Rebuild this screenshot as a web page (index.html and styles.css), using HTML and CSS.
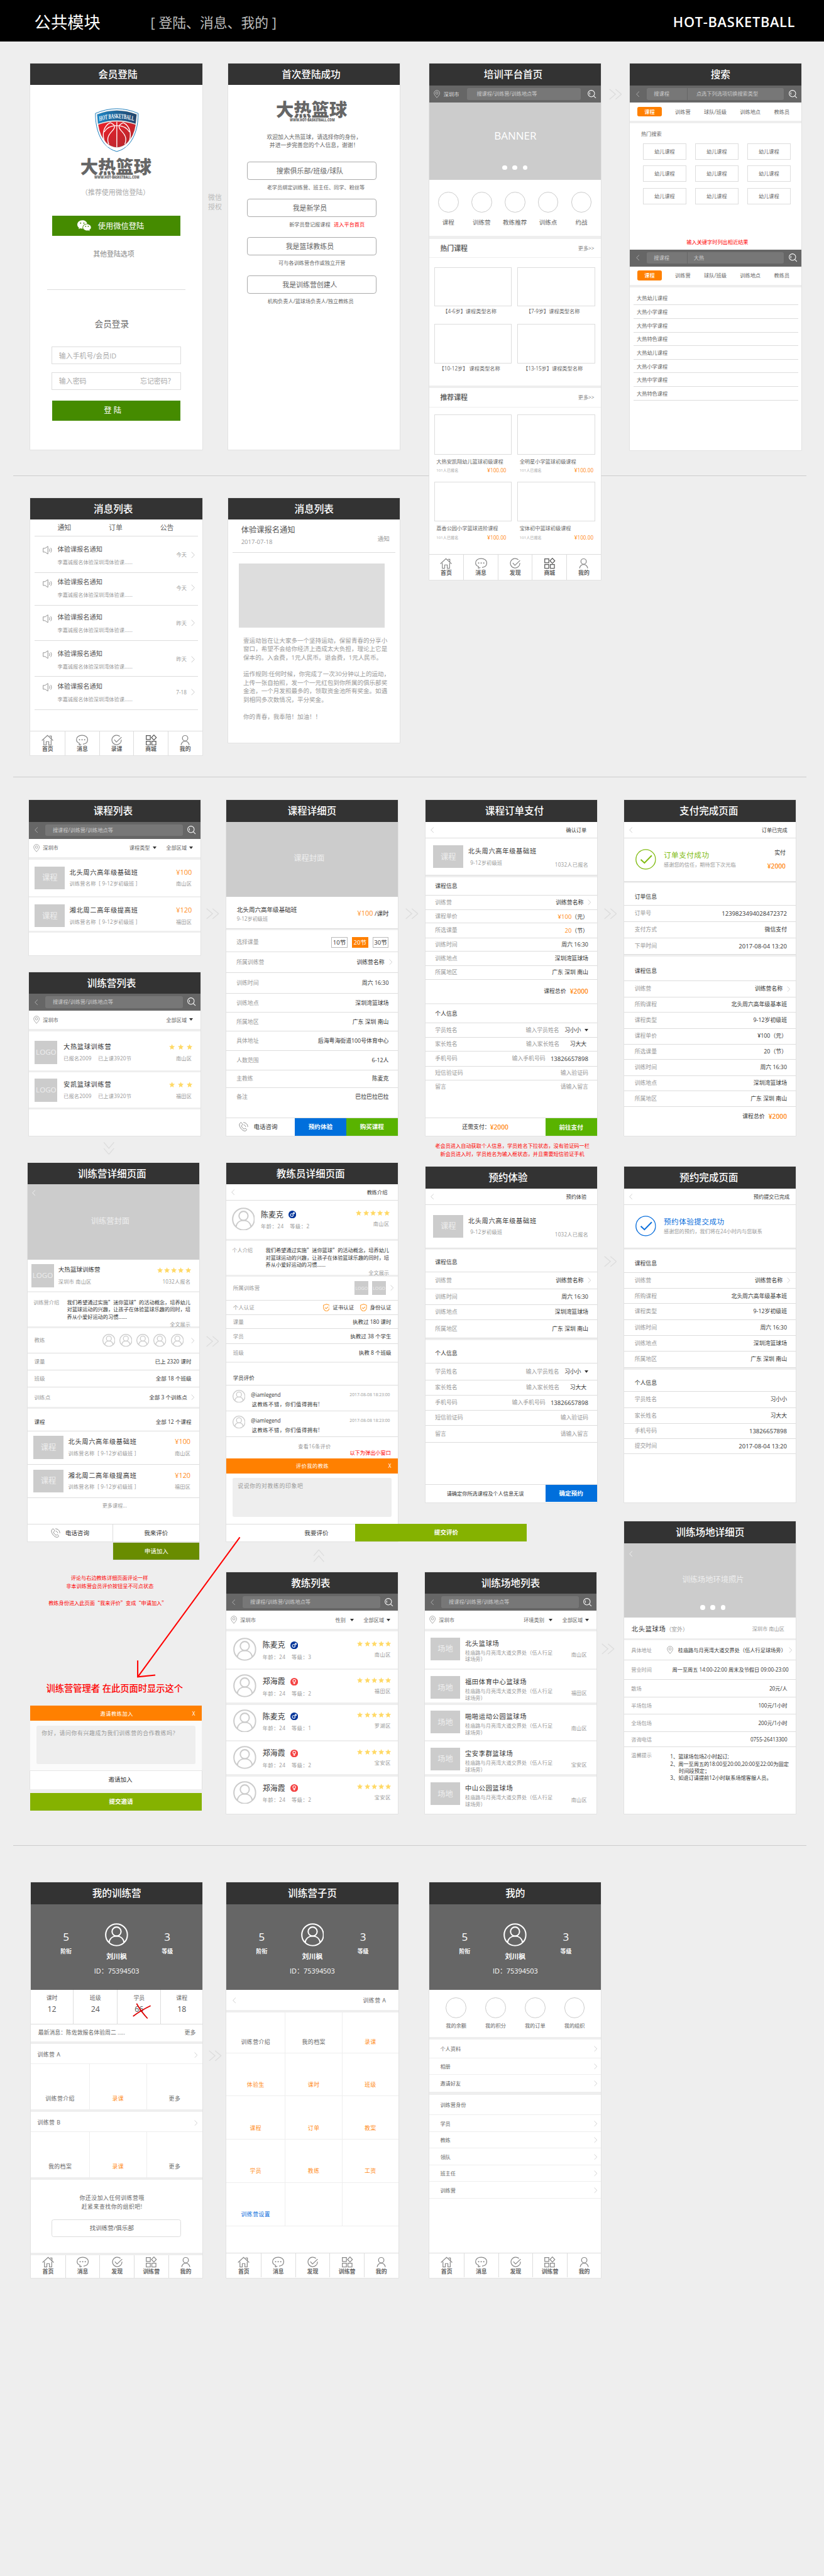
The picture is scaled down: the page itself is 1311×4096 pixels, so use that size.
FILE: index.html
```html
<!DOCTYPE html>
<html lang="zh-CN">
<head>
<meta charset="utf-8">
<title>公共模块 HOT-BASKETBALL</title>
<link rel="stylesheet" href="styles.css">
</head>
<body>
<svg class="defs" aria-hidden="true">
  <linearGradient id="gb"><stop offset="0" stop-color="#1d86c6"/><stop offset="1" stop-color="#23446b"/></linearGradient>
  <linearGradient id="gr" x2="1" y2="1"><stop offset="0" stop-color="#ee2029"/><stop offset="1" stop-color="#b0282e"/></linearGradient>
  <symbol id="back" viewBox="0 0 8 14"><path d="M7.2 .8L1 7l6.200 6.200"/></symbol>
  <symbol id="next" viewBox="0 0 8 14"><path d="M.8 .8L7 7 .8 13.200"/></symbol>
  <symbol id="dbl" viewBox="0 0 30 26"><path d="M1 1l14 12L1 25M15 1l14 12-14 12"/></symbol>
  <symbol id="search" viewBox="0 0 20 20"><circle cx="8.500" cy="8.500" r="7.600"/><path d="M14 14l5.300 5.200M5.500 6a4 4 0 0 0 0 5"/></symbol>
  <symbol id="pin" viewBox="0 0 15 19"><path d="M7.500 18C3.500 13.500 1 10.500 1 7.300a6.500 6.300 0 0 1 13 0C14 10.500 11.500 13.500 7.500 18z"/><circle cx="7.500" cy="7.300" r="2.800"/></symbol>
  <symbol id="home" viewBox="0 0 28 26"><path d="M1 14L14 2l13 12M18.500 3.500H23v6M5.500 12v12.500H11v-8h6v8h5.500V12"/></symbol>
  <symbol id="chat" viewBox="0 0 28 26"><path d="M7 24.500l1-4C3.500 18.500 1 15.500 1 12 1 6 6.500 1.500 14 1.500S27 6 27 12c0 5.500-4.500 9.500-11 10.500M7 24.500l5-2"/><path class="dots" d="M8 12h.1M14 12h.1M20 12h.1"/></symbol>
  <symbol id="check" viewBox="0 0 26 26"><path d="M20.500 4.500a11 11 0 1 0 3.500 7.500M7.500 12l5 5.500L24.500 6"/></symbol>
  <symbol id="shop" viewBox="0 0 26 26"><path d="M1.500 2.500h9.500v9H1.500zM1.500 15.500h9.500v9H1.500zM14.500 15.500H24v9h-9.500zM19.300 1l5.700 6-5.700 6-5.700-6z"/></symbol>
  <symbol id="me" viewBox="0 0 26 26"><circle cx="13" cy="8.500" r="6.300"/><path d="M3.500 24.500c1-5.500 4-9 9.500-9s8.500 3.500 9.500 9"/></symbol>
  <symbol id="avatar" viewBox="0 0 54 54"><circle cx="27" cy="27" r="25.300"/><circle cx="27" cy="19.500" r="10.500"/><path d="M9.500 45c1.500-9.500 8.500-15 17.500-15s16 5.500 17.500 15"/></symbol>
  <symbol id="star" viewBox="0 0 14 14"><path d="M7 .3l2 4.600 4.900.5-3.700 3.300 1.100 5L7 11.200l-4.300 2.500 1.100-5L.1 5.400 5 4.900z"/></symbol>
  <symbol id="phone" viewBox="0 0 22 22"><path d="M7.500 3.500C6 1 4.500 1 3 2.500-.5 6 2 12 6 16.500s8.500 5.500 11 3.500c2-1.500 1.500-2.500-.5-4s-3-1-4 .5c-3-1-6-5-6.500-7.500C8.500 7.500 9 6 7.500 3.500zM11 6.500c3 .5 4.500 2.500 5 5M10.500 1.300c6 .2 10 4 10.300 10.200"/></symbol>
  <symbol id="guard" viewBox="0 0 16 18"><path d="M8 1l7 2.500v6c0 4-3.500 6.500-7 8-3.500-1.500-7-4-7-8v-6zM4.500 9l2.700 2.500 4.500-4.500"/></symbol>
  <symbol id="speaker" viewBox="0 0 22 20"><path d="M1 5.500h4.500L12 1v18l-6.500-4.500H1zM15 6.500c1.500 2 1.500 5 0 7M18.500 4.500c2.500 3.500 2.500 7.500 0 11"/></symbol>
  <symbol id="male" viewBox="0 0 18 18"><circle cx="9" cy="9" r="9" fill="#039" stroke="none"/><circle cx="7.700" cy="10.300" r="3.400"/><path d="M10.200 7.800L13.500 4.500M10 4.300h3.700V8"/></symbol>
  <symbol id="female" viewBox="0 0 18 18"><circle cx="9" cy="9" r="9" fill="#f44343" stroke="none"/><circle cx="9" cy="6.800" r="3.200"/><path d="M9 10v4.800M6.700 12.600h4.600"/></symbol>
  <symbol id="ring" viewBox="0 0 48 48"><circle cx="24" cy="24" r="22.800"/><path d="M12.500 24.500l8.500 8 17-17.500" stroke-width="3"/></symbol>
  <symbol id="wechat" viewBox="0 0 32 26"><path fill="#fff" d="M11.500.5C5 .5 0 5 0 10.500c0 3 1.500 5.600 4 7.400L3 21l4-2c1.800.6 3.500.8 5.500.7C11 13 16 8 23 8.300 22 3.500 17.500.5 11.500.5z"/><path fill="#fff" d="M22.500 9.500C17.300 9.500 13.500 13 13.500 17s3.800 7.300 9 7.300c1.200 0 2.300-.1 3.400-.5l3 1.700-.8-2.800C30.500 21.300 32 19.300 32 17c0-4-4.300-7.500-9.500-7.500z"/><g fill="#458b00"><circle cx="7.700" cy="7" r="1.500"/><circle cx="15.300" cy="7" r="1.500"/><circle cx="19.500" cy="14.500" r="1.300"/><circle cx="25.500" cy="14.500" r="1.300"/></g></symbol>
</svg>

<main class="board">
<header class="top"><h1>公共模块</h1><p>[ 登陆、消息、我的 ]</p><strong>HOT-BASKETBALL</strong></header>
<hr class="cut c1"><hr class="cut c2"><hr class="cut c3">

<section class="phone login">
  <h2>会员登陆</h2>
  <svg class="shield" viewBox="480 90 316 316">
    <path d="M488 131Q560 99 638 98q78 1 150 33c0 84-19 159-64 214q-38 42-86 53-48-11-86-53c-45-55-64-130-64-214z" fill="#fff" stroke="#0a72b5" stroke-width="4"/>
    <path d="M500 138q138-55 277 0l-7 66q-131-48-264 0z" fill="url(#gb)"/>
    <path d="M508 210q130-44 262 0-12 82-60 128-32 30-72 31-40-1-72-31-46-46-58-128z" fill="url(#gr)"/>
    <g fill="none" stroke="#fff" stroke-width="6"><path d="M638 190v180M592 196c-46 22-56 76-44 122 6 20 16 34 28 46M684 196c46 22 56 76 44 122-6 20-16 34-28 46M592 196c44 18 34 36 10 62-28 30-34 54-20 90M684 196c-44 18-34 36-10 62 28 30 34 54 20 90M549 262c20-34 50-46 89-46s69 12 89 46"/></g>
    <g transform="scale(.563 1)"><path id="arc" d="M916 185q217-40 450 2" fill="none" stroke="none"/><text class="shield-t"><textPath href="#arc">HOT BASKETBALL</textPath></text></g>
  </svg>
  <div class="brand"><b>大热篮球</b><small>WWW.HOT-BASKETBALL.COM</small></div>
  <p class="tip">（推荐使用微信登陆）</p>
  <button class="green"><svg><use href="#wechat"/></svg>使用微信登陆</button>
  <p class="alt">其他登陆选项</p>
  <h3>会员登录</h3>
  <div class="field">输入手机号/会员ID</div>
  <div class="field">输入密码<span>忘记密码？</span></div>
  <button class="green">登 陆</button>
</section>
<p class="auth">微信<br>授权</p>

<section class="phone first">
  <h2>首次登陆成功</h2>
  <div class="brand"><b>大热篮球</b><small>WWW.HOT-BASKETBALL.COM</small></div>
  <p class="hi">欢迎加入大热篮球，请选择你的身份，<br>并进一步完善您的个人信息，谢谢！</p>
  <button>搜索俱乐部/班级/球队</button><p class="a">老学员绑定训练营、班主任、同学、粉丝等</p>
  <button>我是新学员</button><p class="b">新学员登记报课程<em>进入平台首页</em></p>
  <button>我是篮球教练员</button><p class="c">可与各训练营合作或独立开营</p>
  <button>我是训练营创建人</button><p class="d">机构负责人/篮球场负责人/独立教练员</p>
</section>

<section class="phone home">
  <h2>培训平台首页</h2>
  <div class="bar"><svg class="pin"><use href="#pin"/></svg><span class="city">深圳市</span><div class="input">搜课程/训练营/训练地点等</div><svg class="search"><use href="#search"/></svg></div>
  <div class="banner"><b>BANNER</b><div class="pager"><i></i><i></i><i></i></div></div>
  <div class="entries"><span><i></i>课程</span><span><i></i>训练营</span><span><i></i>教练推荐</span><span><i></i>训练点</span><span><i></i>约战</span></div>
  <i class="sep"></i>
  <div class="head"><b>热门课程</b><span>更多&gt;&gt;</span></div>
  <div class="cards"><figure><i></i><figcaption>【4-6岁】课程类型名称</figcaption></figure><figure><i></i><figcaption>【7-9岁】课程类型名称</figcaption></figure><figure><i></i><figcaption>【10-12岁】 课程类型名称</figcaption></figure><figure><i></i><figcaption>【13-15岁】课程类型名称</figcaption></figure></div>
  <i class="sep"></i>
  <div class="head"><b>推荐课程</b><span>更多&gt;&gt;</span></div>
  <div class="cards deals">
    <figure><i></i><figcaption>大热安凯翔幼儿篮球初级课程</figcaption><p><small>101人已报名</small><b>¥100.00</b></p></figure>
    <figure><i></i><figcaption>全明星小学篮球初级课程</figcaption><p><small>101人已报名</small><b>¥100.00</b></p></figure>
    <figure><i></i><figcaption>荔香公园小学篮球进阶课程</figcaption><p><small>101人已报名</small><b>¥100.00</b></p></figure>
    <figure><i></i><figcaption>宝体初中篮球初级课程</figcaption><p><small>101人已报名</small><b>¥100.00</b></p></figure>
  </div>
  <nav class="tabs"><a><svg><use href="#home"/></svg>首页</a><a><svg><use href="#chat"/></svg>消息</a><a><svg><use href="#check"/></svg>发现</a><a><svg class="dk"><use href="#shop"/></svg>商城</a><a><svg><use href="#me"/></svg>我的</a></nav>
</section>
<svg class="dbl d1"><use href="#dbl"/></svg>

<section class="phone find">
  <h2>搜索</h2>
  <div class="bar"><svg class="back"><use href="#back"/></svg><div class="input two"><span>搜课程</span><span>点选下列选项切换搜索类型</span></div><svg class="search"><use href="#search"/></svg></div>
  <div class="kinds"><b>课程</b><span>训练营</span><span>球队/班级</span><span>训练地点</span><span>教练员</span></div>
  <i class="sep"></i>
  <div class="hot"><p>热门搜索</p><div class="tags"><span>幼儿课程</span><span>幼儿课程</span><span>幼儿课程</span><span>幼儿课程</span><span>幼儿课程</span><span>幼儿课程</span><span>幼儿课程</span><span>幼儿课程</span><span>幼儿课程</span></div><em>输入关键字时列出相近结果</em></div>
  <div class="bar"><svg class="back"><use href="#back"/></svg><div class="input two typed"><span>搜课程</span><span>大热</span></div><svg class="search"><use href="#search"/></svg></div>
  <div class="kinds"><b>课程</b><span>训练营</span><span>球队/班级</span><span>训练地点</span><span>教练员</span></div>
  <i class="sep"></i>
  <ul><li>大热幼儿课程</li><li>大热小学课程</li><li>大热中学课程</li><li>大热特色课程</li><li>大热幼儿课程</li><li>大热小学课程</li><li>大热中学课程</li><li>大热特色课程</li></ul>
</section>

<section class="phone msgs">
  <h2>消息列表</h2>
  <div class="mtabs"><span>通知</span><span>订单</span><span>公告</span></div>
  <div class="msg"><svg class="spk"><use href="#speaker"/></svg><div><b>体验课报名通知</b><p>李嘉诚报名体验深圳湾体验课......</p></div><time>今天</time><svg class="next"><use href="#next"/></svg></div>
  <div class="msg"><svg class="spk"><use href="#speaker"/></svg><div><b>体验课报名通知</b><p>李嘉诚报名体验深圳湾体验课......</p></div><time>今天</time><svg class="next"><use href="#next"/></svg></div>
  <div class="msg"><svg class="spk"><use href="#speaker"/></svg><div><b>体验课报名通知</b><p>李嘉诚报名体验深圳湾体验课......</p></div><time>昨天</time><svg class="next"><use href="#next"/></svg></div>
  <div class="msg"><svg class="spk"><use href="#speaker"/></svg><div><b>体验课报名通知</b><p>李嘉诚报名体验深圳湾体验课......</p></div><time>昨天</time><svg class="next"><use href="#next"/></svg></div>
  <div class="msg"><svg class="spk"><use href="#speaker"/></svg><div><b>体验课报名通知</b><p>李嘉诚报名体验深圳湾体验课......</p></div><time>7-18</time><svg class="next"><use href="#next"/></svg></div>
  <nav class="tabs"><a><svg><use href="#home"/></svg>首页</a><a><svg><use href="#chat"/></svg>消息</a><a><svg><use href="#check"/></svg>录课</a><a><svg class="dk"><use href="#shop"/></svg>商城</a><a><svg><use href="#me"/></svg>我的</a></nav>
</section>

<section class="phone note">
  <h2>消息列表</h2>
  <div class="nhead"><div><b>体验课报名通知</b><time>2017-07-18</time></div><span>通知</span></div>
  <i class="pic"></i>
  <p>壹运动旨在让大家多一个坚持运动，保留青春的分享小<br>窗口，希望不会给你经济上造成太大负担，理论上它是<br>保本的。入会费，1元人民币。退会费，1元人民币。</p>
  <p>运作规则:任何时候，你完成了一次30分钟以上的运动，<br>上传一张自拍照，发一个一元红包到你所属的俱乐部奖<br>金池，一个月发照最多的，领取资金池所有奖金。如遇<br>到相同多次数情况，平分奖金。</p>
  <p>你的青春，我奉陪！加油！！</p>
</section>

<section class="phone courses">
  <h2>课程列表</h2>
  <div class="bar"><svg class="back"><use href="#back"/></svg><div class="input">搜课程/训练营/训练地点等</div><svg class="search"><use href="#search"/></svg></div>
  <div class="filter"><svg class="pin"><use href="#pin"/></svg><span>深圳市</span><span class="pick">课程类型</span><span class="pick">全部区域</span></div>
  <i class="sep"></i>
  <div class="item"><i class="thumb">课程</i><div><b>北头周六高年级基础班</b><p>训练营名称 &nbsp;[ 9-12岁初级班 ]</p></div><div class="side"><b class="price">¥100</b><p>南山区</p></div></div>
  <i class="sep"></i>
  <div class="item"><i class="thumb">课程</i><div><b>湘北周二高年级提高班</b><p>训练营名称 &nbsp;[ 9-12岁初级班 ]</p></div><div class="side"><b class="price">¥120</b><p>福田区</p></div></div>
  <i class="sep"></i>
</section>

<section class="phone camps">
  <h2>训练营列表</h2>
  <div class="bar"><svg class="back"><use href="#back"/></svg><div class="input">搜课程/训练营/训练地点等</div><svg class="search"><use href="#search"/></svg></div>
  <div class="filter"><svg class="pin"><use href="#pin"/></svg><span>深圳市</span><span class="pick">全部区域</span></div>
  <i class="sep"></i>
  <div class="item deep"><i class="thumb logo">LOGO</i><div><b>大热篮球训练营</b><p><span>已报名2009</span><span>已上课3920节</span></p></div><div class="side"><div class="stars three"><svg><use href="#star"/></svg><svg><use href="#star"/></svg><svg><use href="#star"/></svg></div><p>南山区</p></div></div>
  <i class="sep"></i>
  <div class="item"><i class="thumb logo">LOGO</i><div><b>安凯篮球训练营</b><p><span>已报名2009</span><span>已上课3920节</span></p></div><div class="side"><div class="stars three"><svg><use href="#star"/></svg><svg><use href="#star"/></svg><svg><use href="#star"/></svg></div><p>福田区</p></div></div>
  <i class="sep"></i>
</section>
<svg class="dbl d2"><use href="#dbl"/></svg>
<svg class="dbl down"><use href="#dbl"/></svg>

<section class="phone course">
  <h2>课程详细页</h2>
  <div class="cover">课程封面</div>
  <div class="chead"><div><b>北头周六高年级基础班</b><p>9-12岁初级班</p></div><span><b class="price">¥100</b> /课时</span></div>
  <i class="sep"></i>
  <div class="row low"><span>选择课量</span><div class="qty"><i>10节</i><i class="on">20节</i><i>30节</i></div></div>
  <div class="row go"><span>所属训练营</span><b>训练营名称</b><svg class="next"><use href="#next"/></svg></div>
  <div class="row"><span>训练时间</span><b>周六 16:30</b></div>
  <div class="row"><span>训练地点</span><b>深圳湾篮球场</b></div>
  <div class="row"><span>所属地区</span><b>广东 深圳 南山</b></div>
  <div class="row"><span>具体地址</span><b>后海粤海街道100号体育中心</b></div>
  <div class="row"><span>人数范围</span><b>6-12人</b></div>
  <div class="row"><span>主教练</span><b>陈麦克</b></div>
  <div class="row end"><span>备注</span><b>巴拉巴拉巴拉</b></div>
  <div class="foot"><div class="tel"><svg><use href="#phone"/></svg>电话咨询</div><b class="blue">预约体验</b><b class="lime">购买课程</b></div>
</section>
<svg class="dbl d3"><use href="#dbl"/></svg>

<section class="phone order">
  <h2>课程订单支付</h2>
  <div class="navi"><svg class="back"><use href="#back"/></svg><span>确认订单</span></div>
  <div class="item"><i class="thumb">课程</i><div><b>北头周六高年级基础班</b><p class="in">9-12岁初级班</p></div><div class="side"><p class="cnt">1032人已报名</p></div></div>
  <i class="sep"></i>
  <div class="row cap">课程信息</div>
  <div class="row go"><span>训练营</span><b>训练营名称</b><svg class="next"><use href="#next"/></svg></div>
  <div class="row"><span>课程单价</span><b><em class="n">¥100</em>（元）</b></div>
  <div class="row"><span>所选课量</span><b><em class="n">20</em>（节）</b></div>
  <div class="row"><span>训练时间</span><b>周六 16:30</b></div>
  <div class="row"><span>训练地点</span><b>深圳湾篮球场</b></div>
  <div class="row"><span>所属地区</span><b>广东 深圳 南山</b></div>
  <div class="row total"><b>课程总价</b><em>¥2000</em></div>
  <i class="sep"></i>
  <div class="row cap">个人信息</div>
  <div class="row"><span>学员姓名</span><u>输入学员姓名</u><b class="pick">习小小</b></div>
  <div class="row par"><span>家长姓名</span><u>输入家长姓名</u><b>习大大</b></div>
  <div class="row"><span>手机号码</span><u>输入手机号码</u><b class="n">13826657898</b></div>
  <div class="row"><span>短信验证码</span><u>输入验证码</u></div>
  <div class="row end"><span>留言</span><u>请输入留言</u></div>
  <div class="foot"><p>还需支付：<em>¥2000</em></p><b class="lime">前往支付</b></div>
</section>
<p class="red r1">老会员进入自动获取个人信息，学员姓名下拉状态，没有验证码一栏<br>新会员进入时，学员姓名为输入框状态，并且需要短信验证手机</p>
<svg class="dbl d4"><use href="#dbl"/></svg>

<section class="phone paid">
  <h2>支付完成页面</h2>
  <div class="navi"><svg class="back"><use href="#back"/></svg><span>订单已完成</span></div>
  <div class="result ok"><svg><use href="#ring"/></svg><div><b>订单支付成功</b><p>感谢您的信任，期待您下次光临</p></div><div class="sum">实付<em>¥2000</em></div></div>
  <i class="sep"></i>
  <div class="row cap">订单信息</div>
  <div class="row"><span>订单号</span><b class="n">1239823494028472372</b></div>
  <div class="row"><span>支付方式</span><b>微信支付</b></div>
  <div class="row"><span>下单时间</span><b class="n">2017-08-04 13:20</b></div>
  <i class="sep"></i>
  <div class="row cap">课程信息</div>
  <div class="row go"><span>训练营</span><b>训练营名称</b><svg class="next"><use href="#next"/></svg></div>
  <div class="row"><span>所购课程</span><b>北头周六高年级基本班</b></div>
  <div class="row"><span>课程类型</span><b>9-12岁初级班</b></div>
  <div class="row"><span>课程单价</span><b>¥100（元）</b></div>
  <div class="row"><span>所选课量</span><b>20（节）</b></div>
  <div class="row"><span>训练时间</span><b>周六 16:30</b></div>
  <div class="row"><span>训练地点</span><b>深圳湾篮球场</b></div>
  <div class="row"><span>所属地区</span><b>广东 深圳 南山</b></div>
  <div class="row total"><b>课程总价</b><em>¥2000</em></div>
</section>

<section class="phone camp">
  <h2>训练营详细页面</h2>
  <div class="cover"><svg class="back"><use href="#back"/></svg>训练营封面</div>
  <div class="item"><i class="thumb logo">LOGO</i><div><b class="s">大热篮球训练营</b><p>深圳市 南山区</p></div><div class="side"><div class="stars"><svg><use href="#star"/></svg><svg><use href="#star"/></svg><svg><use href="#star"/></svg><svg><use href="#star"/></svg><svg><use href="#star"/></svg></div><p>1032人报名</p></div></div>
  <i class="sep"></i>
  <div class="intro"><span>训练营介绍</span><p>我们希望通过实施”迷你篮球”的活动概念，培养幼儿<br>对篮球运动的兴趣，让孩子在体验篮球乐趣的同时，培<br>养从小爱好运动的习惯......<i>全文展示</i></p></div>
  <i class="sep"></i>
  <div class="row go"><span>教练</span><div class="faces"><svg><use href="#avatar"/></svg><svg><use href="#avatar"/></svg><svg><use href="#avatar"/></svg><svg><use href="#avatar"/></svg><svg><use href="#avatar"/></svg></div><svg class="next"><use href="#next"/></svg></div>
  <div class="row"><span>课量</span><b>已上 2320 课时</b></div>
  <div class="row"><span>班级</span><b>全部 18 个班级</b></div>
  <div class="row go end"><span>训练点</span><b>全部 3 个训练点</b><svg class="next"><use href="#next"/></svg></div>
  <i class="sep"></i>
  <div class="row low"><b>课程</b><b>全部 12 个课程</b></div>
  <div class="item ln"><i class="thumb">课程</i><div><b>北头周六高年级基础班</b><p>训练营名称 &nbsp;[ 9-12岁初级班 ]</p></div><div class="side"><b class="price">¥100</b><p>南山区</p></div></div>
  <div class="item ln"><i class="thumb">课程</i><div><b>湘北周二高年级提高班</b><p>训练营名称 &nbsp;[ 9-12岁初级班 ]</p></div><div class="side"><b class="price">¥120</b><p>福田区</p></div></div>
  <p class="more">更多课程...</p>
  <div class="foot"><div class="tel"><svg><use href="#phone"/></svg>电话咨询</div><span>我来评价</span></div>
</section>
<div class="join">申请加入</div>
<p class="red r2">评论与右边教练详细页面评论一样<br>非本训练营会员评价按钮呈不可点状态</p>
<p class="red r3">教练身份进入此页面“我来评价”变成“申请加入”</p>
<svg class="dbl d5"><use href="#dbl"/></svg>

<section class="phone coach">
  <h2>教练员详细页面</h2>
  <div class="navi"><svg class="back"><use href="#back"/></svg><span>教练介绍</span></div>
  <div class="person"><svg class="face"><use href="#avatar"/></svg><div><b>陈麦克<svg class="sex"><use href="#male"/></svg></b><p><span>年龄：24</span><span>等级：2</span></p></div><div class="side"><div class="stars"><svg><use href="#star"/></svg><svg><use href="#star"/></svg><svg><use href="#star"/></svg><svg><use href="#star"/></svg><svg><use href="#star"/></svg></div><p>南山区</p></div></div>
  <i class="sep"></i>
  <div class="intro"><span>个人介绍</span><p>我们希望通过实施”迷你篮球”的活动概念，培养幼儿<br>对篮球运动的兴趣，让孩子在体验篮球乐趣的同时，培<br>养从小爱好运动的习惯......<i>全文展示</i></p></div>
  <i class="sep"></i>
  <div class="row go"><span>所属训练营</span><div class="minis"><i>LOGO</i><i>LOGO</i></div><svg class="next"><use href="#next"/></svg></div>
  <div class="row"><span>个人认证</span><div class="certs"><svg><use href="#guard"/></svg>证书认证<svg><use href="#guard"/></svg>身份认证</div></div>
  <div class="row"><span>课量</span><b>执教过 180 课时</b></div>
  <div class="row"><span>学员</span><b>执教过 38 个学生</b></div>
  <div class="row end"><span>班级</span><b>执教 8 个班级</b></div>
  <i class="sep"></i>
  <div class="row low">学员评价</div>
  <div class="talk"><svg><use href="#avatar"/></svg><div><b>@iamlegend</b><p>这教练不错，你们值得拥有!</p></div><time>2017-08-08 18:23:00</time></div>
  <div class="talk"><svg><use href="#avatar"/></svg><div><b>@iamlegend</b><p>这教练不错，你们值得拥有!</p></div><time>2017-08-08 18:23:00</time></div>
  <div class="more2"><p>查看16条评价</p><em>以下为弹出小窗口</em></div>
  <div class="pop"><b>评价我的教练</b><span>X</span></div>
  <div class="area"><p>说说你的对教练的印象吧</p></div>
  <div class="foot"><span>我要评价</span></div>
</section>
<div class="submit">提交评价</div>

<section class="phone order trial">
  <h2>预约体验</h2>
  <div class="navi"><svg class="back"><use href="#back"/></svg><span>预约体验</span></div>
  <div class="item deep"><i class="thumb">课程</i><div><b>北头周六高年级基础班</b><p class="in">9-12岁初级班</p></div><div class="side"><p class="cnt">1032人已报名</p></div></div>
  <i class="sep"></i>
  <div class="row cap">课程信息</div>
  <div class="row go"><span>训练营</span><b>训练营名称</b><svg class="next"><use href="#next"/></svg></div>
  <div class="row"><span>训练时间</span><b>周六 16:30</b></div>
  <div class="row"><span>训练地点</span><b>深圳湾篮球场</b></div>
  <div class="row"><span>所属地区</span><b>广东 深圳 南山</b></div>
  <i class="sep"></i>
  <div class="row cap">个人信息</div>
  <div class="row"><span>学员姓名</span><u>输入学员姓名</u><b class="pick">习小小</b></div>
  <div class="row par"><span>家长姓名</span><u>输入家长姓名</u><b>习大大</b></div>
  <div class="row"><span>手机号码</span><u>输入手机号码</u><b class="n">13826657898</b></div>
  <div class="row"><span>短信验证码</span><u>输入验证码</u></div>
  <div class="row"><span>留言</span><u>请输入留言</u></div>
  <i></i>
  <div class="foot"><p>请确定你所选课程及个人信息无误</p><b class="blue">确定预约</b></div>
</section>
<svg class="dbl d6"><use href="#dbl"/></svg>

<section class="phone paid booked">
  <h2>预约完成页面</h2>
  <div class="navi"><svg class="back"><use href="#back"/></svg><span>预约提交已完成</span></div>
  <div class="result book"><svg><use href="#ring"/></svg><div><b>预约体验提交成功</b><p>感谢您的预约，我们将在24小时内与您联系</p></div></div>
  <i class="sep"></i>
  <div class="row cap">课程信息</div>
  <div class="row go"><span>训练营</span><b>训练营名称</b><svg class="next"><use href="#next"/></svg></div>
  <div class="row"><span>所购课程</span><b>北头周六高年级基本班</b></div>
  <div class="row"><span>课程类型</span><b>9-12岁初级班</b></div>
  <div class="row"><span>训练时间</span><b>周六 16:30</b></div>
  <div class="row"><span>训练地点</span><b>深圳湾篮球场</b></div>
  <div class="row"><span>所属地区</span><b>广东 深圳 南山</b></div>
  <i class="sep"></i>
  <div class="row cap">个人信息</div>
  <div class="row"><span>学员姓名</span><b>习小小</b></div>
  <div class="row"><span>家长姓名</span><b>习大大</b></div>
  <div class="row"><span>手机号码</span><b class="n">13826657898</b></div>
  <div class="row"><span>提交时间</span><b class="n">2017-08-04 13:20</b></div>
</section>

<p class="red big">训练营管理者 在此页面时显示这个</p>
<section class="invite">
  <div class="pop"><b>邀请教练加入</b><span>X</span></div>
  <div class="area"><p>你好，请问你有兴趣成为我们训练营的合作教练吗?</p></div>
  <div class="white">邀请加入</div>
  <div class="send">提交邀请</div>
</section>
<svg class="dbl up"><use href="#dbl"/></svg>

<section class="phone coaches">
  <h2>教练列表</h2>
  <div class="bar"><svg class="back"><use href="#back"/></svg><div class="input">搜课程/训练营/训练地点等</div><svg class="search"><use href="#search"/></svg></div>
  <div class="filter"><svg class="pin"><use href="#pin"/></svg><span>深圳市</span><span class="pick wide">性别</span><span class="pick">全部区域</span></div>
  <i class="sep"></i>
  <div class="person deep"><svg class="face"><use href="#avatar"/></svg><div><b>陈麦克<svg class="sex"><use href="#male"/></svg></b><p><span>年龄：24</span><span>等级：3</span></p></div><div class="side"><div class="stars"><svg><use href="#star"/></svg><svg><use href="#star"/></svg><svg><use href="#star"/></svg><svg><use href="#star"/></svg><svg><use href="#star"/></svg></div><p>南山区</p></div></div>
  <i class="sep"></i>
  <div class="person"><svg class="face"><use href="#avatar"/></svg><div><b>郑海霞<svg class="sex"><use href="#female"/></svg></b><p><span>年龄：24</span><span>等级：2</span></p></div><div class="side"><div class="stars"><svg><use href="#star"/></svg><svg><use href="#star"/></svg><svg><use href="#star"/></svg><svg><use href="#star"/></svg><svg><use href="#star"/></svg></div><p>福田区</p></div></div>
  <i class="sep"></i>
  <div class="person"><svg class="face"><use href="#avatar"/></svg><div><b>陈麦克<svg class="sex"><use href="#male"/></svg></b><p><span>年龄：24</span><span>等级：1</span></p></div><div class="side"><div class="stars"><svg><use href="#star"/></svg><svg><use href="#star"/></svg><svg><use href="#star"/></svg><svg><use href="#star"/></svg><svg><use href="#star"/></svg></div><p>罗湖区</p></div></div>
  <i class="sep"></i>
  <div class="person"><svg class="face"><use href="#avatar"/></svg><div><b>郑海霞<svg class="sex"><use href="#female"/></svg></b><p><span>年龄：24</span><span>等级：2</span></p></div><div class="side"><div class="stars"><svg><use href="#star"/></svg><svg><use href="#star"/></svg><svg><use href="#star"/></svg><svg><use href="#star"/></svg><svg><use href="#star"/></svg></div><p>宝安区</p></div></div>
  <i class="sep"></i>
  <div class="person"><svg class="face"><use href="#avatar"/></svg><div><b>郑海霞<svg class="sex"><use href="#female"/></svg></b><p><span>年龄：24</span><span>等级：2</span></p></div><div class="side"><div class="stars"><svg><use href="#star"/></svg><svg><use href="#star"/></svg><svg><use href="#star"/></svg><svg><use href="#star"/></svg><svg><use href="#star"/></svg></div><p>宝安区</p></div></div>
</section>

<section class="phone coaches venues">
  <h2>训练场地列表</h2>
  <div class="bar"><svg class="back"><use href="#back"/></svg><div class="input">搜课程/训练营/训练地点等</div><svg class="search"><use href="#search"/></svg></div>
  <div class="filter"><svg class="pin"><use href="#pin"/></svg><span>深圳市</span><span class="pick wide">环境类别</span><span class="pick">全部区域</span></div>
  <i class="sep"></i>
  <div class="item"><i class="thumb">场地</i><div><b>北头篮球场</b><p class="addr">桂庙路与月亮湾大道交界处（伍人行足<br>球场旁）</p></div><div class="side"><p>南山区</p></div></div>
  <i class="sep"></i>
  <div class="item"><i class="thumb">场地</i><div><b>福田体育中心篮球场</b><p class="addr">桂庙路与月亮湾大道交界处（伍人行足<br>球场旁）</p></div><div class="side"><p>福田区</p></div></div>
  <i class="sep"></i>
  <div class="item"><i class="thumb">场地</i><div><b>啪啪运动公园篮球场</b><p class="addr">桂庙路与月亮湾大道交界处（伍人行足<br>球场旁）</p></div><div class="side"><p>南山区</p></div></div>
  <i class="sep"></i>
  <div class="item"><i class="thumb">场地</i><div><b>宝安李群篮球场</b><p class="addr">桂庙路与月亮湾大道交界处（伍人行足<br>球场旁）</p></div><div class="side"><p>宝安区</p></div></div>
  <i class="sep"></i>
  <div class="item"><i class="thumb">场地</i><div><b>中山公园篮球场</b><p class="addr">桂庙路与月亮湾大道交界处（伍人行足<br>球场旁）</p></div><div class="side"><p>南山区</p></div></div>
</section>
<svg class="dbl d7"><use href="#dbl"/></svg>

<section class="phone venue">
  <h2>训练场地详细页</h2>
  <div class="cover"><svg class="back"><use href="#back"/></svg>训练场地环境照片<div class="pager"><i></i><i></i><i></i></div></div>
  <div class="vhead"><p><b>北头篮球场</b>（室外）</p><span>深圳市 南山区</span></div>
  <i class="sep"></i>
  <div class="row go"><span>具体地址</span><svg class="pin"><use href="#pin"/></svg><b>桂庙路与月亮湾大道交界处（伍人行足球场旁）</b><svg class="next"><use href="#next"/></svg></div>
  <div class="row hours"><span>营业时间</span><b>周一至周五 14:00-22:00 周末及节假日 09:00-23:00</b></div>
  <div class="row"><span>散场</span><b>20元/人</b></div>
  <div class="row"><span>半场包场</span><b>100元/1小时</b></div>
  <div class="row"><span>全场包场</span><b>200元/1小时</b></div>
  <div class="row"><span>咨询电话</span><b>0755-26413300</b></div>
  <div class="rules"><span>温馨提示</span><ol><li>1、篮球场包场2小时起订;</li><li>2、周一至周五的18:00至20:00,20:00至22:00为固定</li><li class="ind">时间段预定；</li><li>3、如退订请提前12小时联系场馆客服人员。</li></ol></div>
</section>

<section class="phone mycamp">
  <h2>我的训练营</h2>
  <div class="profile"><p class="stat"><b>5</b>阶衔</p><div><svg><use href="#avatar"/></svg><b>刘川枫</b><span>ID：75394503</span></div><p class="stat"><b>3</b>等级</p></div>
  <div class="counts"><p>课时<b>12</b></p><p>班级<b>24</b></p><p>学员<b>66</b><svg class="cross" viewBox="0 0 42 36"><path d="M9 1q10 18 25 34M1 30Q18 17 41 6"/></svg></p><p>课程<b>18</b></p></div>
  <div class="news"><span>最新消息：陈佐敦报名体验周二 .....</span><span>更多</span></div>
  <i class="sep"></i>
  <div class="name"><span>训练营 A</span><svg class="next"><use href="#next"/></svg></div>
  <div class="cells"><span>训练营介绍</span><em>录课</em><span>更多</span></div>
  <i class="sep"></i>
  <div class="name"><span>训练营 B</span><svg class="next"><use href="#next"/></svg></div>
  <div class="cells"><span>我的档案</span><em>录课</em><span>更多</span></div>
  <i class="sep"></i>
  <div class="empty"><p>你还没加入任何训练营哦<br>赶紧来查找你的组织吧!</p><button>找训练营/俱乐部</button></div>
  <i class="sep"></i>
  <nav class="tabs"><a><svg><use href="#home"/></svg>首页</a><a><svg><use href="#chat"/></svg>消息</a><a><svg><use href="#check"/></svg>发现</a><a><svg><use href="#shop"/></svg>训练营</a><a><svg><use href="#me"/></svg>我的</a></nav>
</section>
<svg class="dbl d8"><use href="#dbl"/></svg>

<section class="phone sub">
  <h2>训练营子页</h2>
  <div class="profile"><p class="stat"><b>5</b>阶衔</p><div><svg><use href="#avatar"/></svg><b>刘川枫</b><span>ID：75394503</span></div><p class="stat"><b>3</b>等级</p></div>
  <div class="navi"><svg class="back"><use href="#back"/></svg><span>训练营 A</span></div>
  <i class="sep"></i>
  <div class="cells"><span>训练营介绍</span><span>我的档案</span><em>录课</em></div>
  <div class="cells"><em>体验生</em><em>课时</em><em>班级</em></div>
  <div class="cells"><em>课程</em><em>订单</em><em>教案</em></div>
  <div class="cells"><em>学员</em><em>教练</em><em>工资</em></div>
  <div class="cells"><span class="set">训练营设置</span><span></span><span></span></div>
  <i></i>
  <nav class="tabs"><a><svg><use href="#home"/></svg>首页</a><a><svg><use href="#chat"/></svg>消息</a><a><svg><use href="#check"/></svg>发现</a><a><svg><use href="#shop"/></svg>训练营</a><a><svg><use href="#me"/></svg>我的</a></nav>
</section>

<section class="phone mine">
  <h2>我的</h2>
  <div class="profile"><p class="stat"><b>5</b>阶衔</p><div><svg><use href="#avatar"/></svg><b>刘川枫</b><span>ID：75394503</span></div><p class="stat"><b>3</b>等级</p></div>
  <div class="entries"><span><i></i>我的余额</span><span><i></i>我的积分</span><span><i></i>我的订单</span><span><i></i>我的组织</span></div>
  <i class="sep"></i>
  <div class="link"><span>个人资料</span><svg class="next"><use href="#next"/></svg></div>
  <div class="link"><span>相册</span><svg class="next"><use href="#next"/></svg></div>
  <div class="link"><span>邀请好友</span><svg class="next"><use href="#next"/></svg></div>
  <i class="sep"></i>
  <div class="link"><span>训练营身份</span></div>
  <div class="link"><span>学员</span><svg class="next"><use href="#next"/></svg></div>
  <div class="link"><span>教练</span><svg class="next"><use href="#next"/></svg></div>
  <div class="link"><span>领队</span><svg class="next"><use href="#next"/></svg></div>
  <div class="link"><span>班主任</span><svg class="next"><use href="#next"/></svg></div>
  <div class="link"><span>训练营</span><svg class="next"><use href="#next"/></svg></div>
  <i></i>
  <nav class="tabs"><a><svg><use href="#home"/></svg>首页</a><a><svg><use href="#chat"/></svg>消息</a><a><svg><use href="#check"/></svg>发现</a><a><svg><use href="#shop"/></svg>训练营</a><a><svg><use href="#me"/></svg>我的</a></nav>
</section>

<svg class="pointer" viewBox="0 0 250 335"><path d="M244 5L7 329M6 292v38l41-4"/></svg>
</main>
</body>
</html>
```
FILE: styles.css
```css
*{box-sizing:border-box;margin:0;padding:0}
body{background:#eee;font-family:"Open Sans","Noto Sans CJK SC",sans-serif;color:#666}
i,em{font-style:normal}
b,h2,h3{font-weight:400}
u{text-decoration:none}
ul,ol{list-style:none}
svg{fill:none;stroke:currentColor;display:block;flex:none}
button{font:inherit;color:inherit;border:0;background:none}
.defs{position:absolute;width:0;height:0}
em{color:#ff8c1a}

/* the board is drawn at 1920 x 6000 and scaled as a whole */
.board{position:relative;width:1920.300px;height:6000px;zoom:.68266;overflow:hidden}
.top{height:97px;background:#000;color:#fff;display:flex;align-items:center;padding:4px 67px 0 80px}
.top h1{font-size:38.500px;font-weight:400;width:271px}
.top p{font-size:32px;color:#bbb}
.top strong{margin-left:auto;font-size:32px;font-weight:600;letter-spacing:1px;white-space:nowrap}
.cut{position:absolute;left:31px;width:1849px;height:1px;border:0;background:#ccc}
.c1{top:1108px}.c2{top:1809px}.c3{top:4298px}

/* phone frames */
.phone{position:absolute;width:400px;background:#fff;box-shadow:0 0 0 1px #ddd;display:grid;align-content:start;--l:24px;--r:21px;--t:0px;font-size:12px;line-height:1.4}
.phone>h2{background:#333;color:#fff;font-size:23px;font-weight:500;letter-spacing:-.2px;display:block;text-align:center;line-height:50px;text-indent:calc(var(--t)*2)}
.sep{background:#eee}
.back{width:8px;height:14px}
.next{width:8px;height:14px;color:#bbb}
.search{width:20px;height:20px;stroke-width:1.500}
.pin{width:15px;height:19px;stroke-width:1.200}
.bar{background:#666;display:flex;align-items:center;color:#ccc;padding:0 10px 0 14px}
.bar .input{background:#777;border-radius:4px;width:320px;height:27px;line-height:27px;margin-left:17px;padding-left:17px}
.bar .search{margin-left:auto;color:#fff}
.filter{display:flex;align-items:center;padding:0 17px 0 10px;color:#666}
.filter .pin{color:#999;margin-right:8px}
.pick{display:flex;align-items:center;margin-left:23px}
.filter span:nth-of-type(2){margin-left:auto}
.pick::after{content:"";border:5px solid transparent;border-top:6px solid #333;border-bottom:0;margin-left:6px}
.pick.wide::after{margin-left:10px}
.tabs{display:grid;grid-template-columns:repeat(5,1fr);border-top:1px solid #ddd;color:#666}
.tabs a{display:flex;flex-direction:column;align-items:center;padding-top:7px;border-left:1px solid #ddd;font-weight:700;font-size:13px;line-height:20px}
.tabs a:first-child{border-left:0}
.tabs svg{width:28px;height:26px;color:#888;stroke-width:1.800}
.tabs svg.dk{color:#555}
.dots{stroke-width:3;stroke-linecap:round}
.price{color:#ff8c1a}
.dbl{position:absolute;width:30px;height:26px;color:#ddd;stroke-width:2}
.d1{left:1419px;top:207px}
.d2{left:481px;top:2115px}
.d3{left:945px;top:2115px}
.d4{left:1407px;top:2115px}
.d5{left:480px;top:3112px}
.d6{left:1407px;top:2925px}
.d7{left:1402px;top:3828px}
.d8{left:487px;top:4775px}
.down{left:239px;top:2662px;transform:rotate(90deg)}
.up{left:728px;top:3611px;transform:rotate(-90deg)}
.pager{display:flex}
.pager i{width:11px;height:11px;border-radius:50%;background:#fff}
.cover{background:#ccc;color:#eee;font-size:18px;display:flex;align-items:center;justify-content:center;position:relative}
.cover .back{position:absolute;left:11px;top:13px;color:#fff}

/* rows */
.row{display:flex;align-items:center;border-bottom:1px solid #ddd;padding:0 var(--r) 0 var(--l);font-size:13px;color:#333;white-space:nowrap}
.row span{color:#999;margin-right:auto}
.row u{color:#999;margin-left:12px}
.row u+b{margin-left:12px}
.row .n{font-size:14px}
.row.go{padding-right:13px}
.row.go .next{margin-left:10px}
.row.cap{padding-top:2px}
.row.end{border:0}
.row.low{padding-top:12px;justify-content:space-between}
.row.par{padding-right:24px}
.row.par b{margin-left:24px}
.row .pick::after{margin-left:8px}
.row.total{border:0;justify-content:flex-end}
.total em,.foot em,.sum em{font-size:15px;font-weight:600;margin-left:9px}
.foot{display:flex;border-top:1px solid #ddd;font-size:14px;color:#333;align-items:stretch}
.foot>*{display:flex;align-items:center;justify-content:center}
.foot>b{color:#fff;font-weight:600;width:120px}
.blue{background:#006fdc}
.lime{background:#59b300}
.tel svg{width:22px;height:22px;margin-right:12px;stroke-width:1.200;color:#777}

/* list items */
.item{display:flex;align-items:flex-start;padding:16px 20px 0 14px;color:#999}
.thumb{width:70px;height:53px;background:#ccc;color:#eee;font-size:18px;display:flex;align-items:center;justify-content:center;flex:none;margin-right:11px}
.logo{width:53px;font-size:17px;margin-right:14px}
.item b{display:block;font-size:15px;letter-spacing:1px;line-height:27px;color:#333}
.item b.s{font-size:14px;letter-spacing:0}
.item p{line-height:26px;letter-spacing:.3px;white-space:nowrap}
.item p span{margin-right:15px}
.side{margin-left:auto;text-align:right}
.item .side .price{font-size:16px;letter-spacing:0;color:#ff8c1a}
.stars{display:flex;gap:3px;height:27px;align-items:center;justify-content:flex-end;margin-right:-1px}
.stars svg{width:13.500px;height:13.500px;fill:#ffd966;stroke:none}
.stars.three{gap:7px}
.ln{border-bottom:1px solid #ddd}
.navi{display:flex;align-items:center;justify-content:space-between;border-bottom:1px solid #ddd;padding:0 24px 0 12px;color:#333}
.navi .back{color:#bbb}

/* login */
.login{left:71px;top:148px;height:900px;--t:3.500px;display:flex;flex-direction:column;align-items:center;font-size:16px}
.login>h2{width:100%;height:50px}
.shield{width:105px;height:105px;margin-top:52px;margin-left:3px}
.shield-t{font:700 47px "Liberation Serif",serif;fill:#fff;stroke:none}
.brand{width:168px;height:54px;color:#666}
.brand b{display:block;height:44px;font:900 41.500px/44px "Noto Sans CJK SC",sans-serif;white-space:nowrap}
.brand small{display:block;width:145px;margin-left:32px;font-size:9.500px;font-weight:800;line-height:10px;white-space:nowrap;transform:scaleX(.74);transform-origin:0 0}
.login .brand{margin-top:10px}
.tip{color:#aaa;line-height:60px;margin-right:4px}
.green{width:300px;height:47px;background:#458b00;color:#fff;font-size:18px;display:flex;align-items:center}
.login .green{margin-top:24px;padding-left:59px}
.green svg{width:32px;height:26px;stroke:none;margin-right:16px}
.alt{color:#888;line-height:84px;margin-right:12px}
.login h3{font-size:20px;width:323px;border-top:1px solid #ddd;margin-top:40px;padding:63px 21px 0 0;height:133px;line-height:32px;text-align:center}
.field{width:302px;height:42px;border:1px solid #ddd;color:#aaa;padding:0 14px 0 16px;display:flex;align-items:center;justify-content:space-between}
.field+.field{margin-top:18px}
.login .field+.green{padding-left:121px}
.auth{position:absolute;left:485px;top:448px;font-size:16px;line-height:22px;color:#bbb}

/* first login */
.first{left:532px;top:148px;height:900px;--t:-7px;display:flex;flex-direction:column;align-items:center}
.first>h2{width:100%}
.first .brand{margin:34px 10px 0 0}
.hi{font-size:13px;line-height:19.600px;margin:24px 0 28px;text-align:center}
.first button{width:302px;height:42px;border:1px solid #aaa;border-radius:6px;font-size:16px;padding-right:10px;margin-right:10px;flex:none}
.first p.a,.first p.b,.first p.c,.first p.d{line-height:34px;height:44px;white-space:nowrap}
.first p.a{padding-left:8px}
.first p.b{height:47px;padding-left:60px}
.first p.c{height:48px;padding-right:10px}
.first p.d{padding-right:16px}
.first em{color:red;margin-left:8px}

/* platform home */
.home{left:1000px;top:148px;height:1202px;--t:-4px;grid-template-rows:51px 40px 180px 131px 6px 45px 297px 6px 45px 342px 59px}
.home .bar{padding-left:11px}
.home .bar .input{width:265px;margin-left:19px;padding-left:22px}
.home .city{margin-left:8px;color:#ddd}
.banner{background:#ccc;color:#fff;text-align:center;padding-top:60px}
.banner b{display:block;font-size:25px;line-height:34px;margin-right:-2px}
.banner .pager{justify-content:center;gap:13px;margin-top:52px}
.entries{display:flex;justify-content:space-between;padding:28px 10px 0;font-size:14px}
.entries span{width:70px;display:flex;flex-direction:column;align-items:center}
.entries i{width:48px;height:48px;border:1px solid #ccc;border-radius:50%;margin-bottom:14px}
.head{display:flex;justify-content:space-between;align-items:center;padding:0 15px 0 26px;border-bottom:1px solid #eee}
.head b{font-size:16px;font-weight:600}
.head span{color:#888}
.cards{display:grid;grid-template-columns:181px 181px;column-gap:13px;row-gap:18px;padding:21px 12px 0;align-content:start;height:297px}
.cards i{display:block;height:92px;border:1px solid #ddd}
.cards figcaption{text-align:center;line-height:23px;padding-right:16px}
.deals{padding-top:17px;height:342px;row-gap:16px}
.deals i{height:93px}
.deals figcaption{text-align:left;padding:4px 0 0 5px}
.deals p{display:flex;justify-content:space-between;padding:0 4px 0 5px;line-height:20px;color:#aaa}
.deals figure:nth-child(odd) p{padding-right:13px}
.deals p b{color:#ff8c1a}
.deals small{font-size:9px}

/* search */
.find{left:1468px;top:148px;height:901px;--t:11px;grid-template-rows:51px 40px 42px 6px 294px 40px 42px 6px}
.input.two{display:flex}
.two span:first-child{width:79px;border-right:1px solid #666}
.two span+span{padding-left:20px}
.typed span+span{padding-left:14px}
.kinds{display:flex;align-items:center;justify-content:space-between;padding:0 28px 0 18px}
.kinds b{background:#ff8000;color:#fff;width:56px;line-height:23px;border-radius:4px;text-align:center;font-weight:500}
.hot{padding:17px 25px 0 26px}
.hot p{line-height:17px}
.tags{display:grid;grid-template-columns:repeat(3,102px);justify-content:space-between;row-gap:14px;margin:13px 0 79px 4px}
.tags span{border:1px solid #ddd;line-height:35px;text-align:center}
.hot em{display:block;color:red;text-align:center;margin-left:7px}
.find li{height:31.700px;border-bottom:1px solid #ddd;margin:0 8px 0 9px;padding:7px 0 0 7px}
.find li:first-child{height:42px;padding-top:17px}

/* messages */
.msgs{left:71px;top:1160px;height:600px;--t:-7px;grid-template-rows:50px 40px 84px 77px 82px 84px 77px 48px 58px}
.msgs .tabs{grid-row:9}
.mtabs{display:flex;justify-content:space-between;font-size:16px;line-height:38px;margin:0 10px;padding:0 56px 0 53px;border-bottom:1px solid #ddd}
.msg{display:flex;align-items:flex-end;margin:0 10px;border-bottom:1px solid #ddd;color:#999;padding:0 6px 9px 18px}
.msg .spk{width:22px;height:20px;margin:0 13px 32px 0;color:#888;stroke-width:1.300}
.msg b{display:block;font-size:15px;color:#555;line-height:29px}
.msg p{line-height:29px}
.msg time{margin:0 11px 23px auto}
.msg .next{height:16px;width:9px;margin-bottom:23px}
.note{left:532px;top:1160px;height:570px;display:block}
.nhead{display:flex;align-items:center;justify-content:space-between;height:77px;margin:0 10px;padding:0 14px 0 20px;border-bottom:1px solid #ddd;font-size:14px;color:#999}
.nhead b{display:block;font-size:18px;line-height:28px;color:#555}
.nhead span{padding-top:14px}
.nhead time{line-height:28px}
.pic{display:block;background:#ddd;height:150px;margin:25px 35px 20px 25px}
.note p{font-size:14px;line-height:19.700px;color:#999;margin:0 0 19.700px 35px;white-space:nowrap}

/* lists */
.courses{left:67px;top:1864px;height:361px;--t:-3.500px;grid-template-rows:50px 40px 42px 6px 85px 4px 77px 4px}
.camps{left:67px;top:2264px;height:381px;--t:-7px;grid-template-rows:50px 40px 42px 6px 91px 4px 83px 4px}
.item.deep{padding-top:23px}

/* course detail */
.course{left:527px;top:1864px;height:781px;grid-template-rows:50px 175px 74px 3px 52px 48px 49px 44px 44px 45px 45px 41px 42px 27px 42px}
.course .cover{padding-right:13px;padding-bottom:6px}
.course .foot{grid-row:15}
.course .tel{width:160px;padding-right:10px}
.chead{display:flex;justify-content:space-between;align-items:center;padding:4px 21px 0 25px;border-bottom:1px solid #ddd;color:#999}
.chead div b{display:block;font-size:14px;line-height:25px;color:#333}
.chead span{font-size:14px;color:#333}
.chead .price{font-size:16px}
.course .row.low{padding-top:8px}
.qty{display:flex;gap:10px;font-size:14px}
.qty i{border:1px solid #bbb;width:38px;height:24px;line-height:22px;text-align:center}
.qty .on{background:#ff8000;border-color:#ff8000;color:#fff}

/* orders */
.order{left:991px;top:1863px;height:782px;--t:8px;--l:23px;--r:20px;grid-template-rows:51px 39px 86px 4px 43px 34px 31px 34px 32px 33px 32px 54px 4px 43px 34px 33px 34px 33px 31px 56px 42px}
.order .item{padding-left:19px;border-bottom:1px solid #ddd}
.order .in{padding-left:5px}
.order .cnt{margin-top:32px}
.order .foot{grid-row:21}
.foot p{width:280px;font-size:13px}
.order .foot em{margin-left:0}
.trial{top:2718px;height:781px;--t:-7px;grid-template-rows:50px 39px 101px 3px 52px 40px 37px 35px 43px 4px 54px 39px 35px 36px 35px 39px 97px 42px}
.trial .foot{grid-row:18}
.trial .foot p{font-size:12px}
.trial .cap{padding-top:8px}
.paid{left:1455px;top:1863px;height:782px;--t:-3px;grid-template-rows:51px 39px 101px 3px 53px 37px 38px 39px 4px 58px 37px 36px 37px 37px 36px 37px 36px 37px 44px}
.paid .cap{padding-top:12px}
.paid .navi{padding-right:20px}
.result{display:flex;align-items:flex-start;padding:25px 24px 0 26px;border-bottom:1px solid #ddd;color:#999}
.result svg{width:48px;height:48px;stroke-width:2;margin-right:18px}
.result b{font-size:17px;letter-spacing:.7px;line-height:28px}
.ok b,.ok svg{color:#80bb10}
.book b,.book svg{color:#0a6fdc}
.sum{margin:0 0 0 auto;color:#333;font-size:13px;text-align:right}
.sum em{display:block;margin:11px 0 0}
.booked{top:2718px;height:781px;grid-template-rows:50px 39px 101px 3px 54px 37px 35px 38px 37px 36px 38px 4px 52px 38px 36px 36px 35px}
.booked .navi{padding-right:15px}

/* camp detail */
.camp{left:64px;top:2708px;height:883px;--t:-3px;--l:16px;--r:18px;grid-template-rows:51px 175px 73px 4px 79px 4px 58px 40px 40px 45px 4px 53px 78px 77px 60px 42px}
.camp .row,.coach .row{font-size:12.500px}
.camp .cover{padding-right:14px;padding-bottom:6px}
.camp .item{padding:11px 20px 0 14px}
.camp .item:nth-child(3){padding-left:9px}
.camp .item:nth-child(3) .thumb{margin-right:10px}
.camp .row.go{padding-right:10px}
.intro{display:flex;padding:14px 16px 0 14px;color:#999}
.intro span{width:78px;line-height:18px}
.intro p{font-family:"Noto Sans CJK SC",sans-serif;color:#333;line-height:16.600px;white-space:nowrap;position:relative}
.intro p i{position:absolute;right:0;bottom:-3px;color:#999}
.faces{display:flex;gap:10px}
.faces svg{width:30px;height:30px;color:#ccc;stroke-width:3.500}
.camp .row.go .faces+.next{margin-left:18px}
.more{text-align:center;line-height:34px;color:#999;padding-left:6px}
.camp .foot>*{flex:1}
.camp .foot span{border-left:1px solid #ddd;flex:0 0 202px}
.join{position:absolute;left:264px;top:3593px;width:201px;height:40px;background:#698c00;color:#fff;font-size:14px;display:flex;align-items:center;justify-content:center;box-shadow:0 0 0 1px #ddd}
.red{position:absolute;color:red;font-size:12px;text-align:center;white-space:nowrap}
.r1{left:1014px;top:2658px;width:360px;line-height:19.500px}
.r2{left:154px;top:3666px;width:202px;line-height:19px}
.r3{left:112px;top:3723px;width:278px;line-height:19px;font-family:"Noto Sans CJK SC",sans-serif}
.big{left:107px;top:3915px;width:320px;font-size:21px;line-height:36px;font-weight:500;letter-spacing:-.1px}
.pointer{position:absolute;left:315px;top:3576px;width:250px;height:335px;color:red;stroke-width:3}

/* coach detail */
.coach{left:527px;top:2708px;height:883px;--t:-3px;--l:16px;--r:15px;grid-template-rows:51px 38px 89px 4px 79px 4px 56px 34px 33px 34px 41px 4px 52px 61px 60px 49px 35px 117px 42px}
.person{display:flex;padding:15px 19px 0 13px;color:#999}
.face{width:54px;height:54px;color:#ccc;stroke-width:3;margin-right:14px}
.person b{display:flex;align-items:center;font-size:17.500px;color:#333;line-height:28px;height:32px;padding-top:2px}
.sex{width:18px;height:18px;color:#fff;stroke-width:1.500;margin-left:12px}
.person p{line-height:26px;letter-spacing:.8px}
.person p span{margin-right:14px}
.person .side .stars{height:26px}
.person .side p{line-height:26px}
.coach .row.go{padding-right:9px}
.minis{display:flex;gap:8px}
.minis i{width:33px;height:33px;line-height:33px;background:#ccc;color:#eee;font-size:10.500px;text-align:center}
.certs{display:flex;align-items:center}
.certs svg{width:16px;height:18px;color:#ff9a2a;stroke-width:1.500;margin:0 7px 0 14px}
.coach .row.low{padding-top:18px}
.talk{display:flex;border-bottom:1px solid #ddd;padding:10px 18px 0 15px}
.talk svg{width:30px;height:30px;color:#ccc;stroke-width:3.500;margin-right:13px}
.talk b{color:#333;line-height:22px}
.talk p{color:#333;letter-spacing:.9px;line-height:22px;padding-left:2px}
.talk time{margin-left:auto;font-size:10px;line-height:22px;color:#999}
.more2{color:#999;text-align:center;line-height:17px;padding-top:12px;letter-spacing:.4px}
.more2 p{margin-left:12px}
.more2 em{display:block;color:red;text-align:right;letter-spacing:0;margin-right:16px;line-height:16px}
.pop{background:#ff8000;color:#fff;display:flex;align-items:center;letter-spacing:.8px;font-size:12px}
.pop b{flex:1;text-align:center;padding-left:24px}
.pop span{width:22px}
.area{padding:11px 15px 16px}
.area p{background:#eee;border-radius:4px;height:90px;padding:10px 12px;font-size:13px;letter-spacing:.9px;color:#999;white-space:nowrap;line-height:18px}
.coach .foot span{flex:1;padding-left:21px}
.submit{position:absolute;left:828px;top:3550px;width:400px;height:40px;background:#85b200;color:#fff;font-size:14px;font-weight:600;line-height:40px;padding-left:184px}
.invite{position:absolute;left:70px;top:3973px;width:400px;font-size:12px;display:grid;grid-template-rows:35px 117px 42px 10px 40px;background:#fbfbfb}
.invite .pop b{padding-left:26px}
.white{background:#fff;box-shadow:0 0 0 1px #ddd;color:#333;font-size:14px;line-height:41px;text-align:center;padding-left:21px}
.invite::after{content:"";background:#eee;grid-row:4;margin-top:1px}
.send{grid-row:5;background:#85b200;color:#fff;font-size:14px;font-weight:600;line-height:40px;text-align:center;padding-left:24px}

/* coaches and venues */
.coaches{left:527px;top:3662px;height:562px;--t:-3px;grid-template-rows:50px 40px 42px 6px 86px 4px 76px 5px 82px 4px 76px 5px}
.coaches .person{padding:10px 16px 0 17px}
.coaches .person.deep{padding-top:15px}
.venues{left:990px;--t:0px}
.venues .item{padding:14px 22px 0 13px}
.venues .item .addr{line-height:15.500px;padding-top:1px;letter-spacing:0}
.venues .side p{margin-top:27px}
.venue{left:1455px;top:3544px;height:681px;--l:16px;--r:20px;grid-template-rows:51px 173px 48px 4px 47px 45px 42px 39px 41px 35px}
.venue .cover{padding:0 0 6px 14px}
.venue .cover .back{top:17px}
.venue .pager{position:absolute;bottom:18px;left:177px;gap:13px}
.vhead{display:flex;align-items:center;justify-content:space-between;padding:4px 27px 0 17px;color:#999}
.vhead p{font-size:13px}
.vhead b{font-size:15px;color:#333;letter-spacing:1px}
.venue .row{font-size:12px}
.venue .row .pin{color:#999;margin-right:11px}
.venue .row.go{padding-right:9px}
.venue .row.go .next{margin-left:6px}
.venue .hours{padding-right:17px}
.rules{display:flex;padding:11px 0 0 16px;color:#999}
.rules span{width:91px}
.rules ol{color:#333;line-height:16.700px;padding-top:3px;white-space:nowrap}
.ind{padding-left:20px}

/* my pages */
.profile{background:#666;color:#fff;display:flex;justify-content:space-between;padding:45px 60px 0}
.profile div{display:flex;flex-direction:column;align-items:center;font-size:16px;line-height:22px}
.profile svg{width:54px;height:54px;stroke-width:3}
.profile div b{font-weight:600;margin:12px 0 11px}
.stat{width:44px;text-align:center;font-size:13px;font-weight:600;padding-top:16px;line-height:20px}
.stat b{display:block;font-size:25px;font-weight:500;line-height:32px;margin-bottom:8px}
.mycamp{left:72px;top:4385px;height:921px;grid-template-rows:50px 200px 80px 40px 6px 46px 106px 6px 47px 106px 6px 169px 6px 53px}
.counts{display:grid;grid-template-columns:98px 103px 101px 98px;border-bottom:1px solid #ddd;font-size:13px;text-align:center}
.counts p{position:relative;border-left:1px solid #ddd;padding-top:10px}
.counts p:first-child{border:0}
.counts b{display:block;font-size:18px;line-height:34px;color:#555}
.cross{position:absolute;left:34px;top:31px;width:43px;height:37px;color:#d00;stroke-width:2.500}
.news{display:flex;justify-content:space-between;align-items:center;font-size:13px;padding:0 16px 0 17px}
.name{display:flex;justify-content:space-between;align-items:center;font-size:13px;letter-spacing:.7px;padding:6px 12px 0 15px;border-bottom:1px solid #eee}
.cells{display:grid;grid-template-columns:136px 133px 131px;font-size:13px;letter-spacing:.7px}
.cells>*{border-left:1px solid #eee;display:flex;align-items:flex-end;justify-content:center;padding-bottom:16px}
.cells>:first-child{border:0}
.empty{text-align:center;font-size:13px;padding-top:33px}
.empty p{letter-spacing:.8px;line-height:20px;padding-right:22px}
.empty button{width:302px;height:41px;border:1px solid #ddd;border-radius:5px;font-size:14px;margin:18px 0 0 -1px;padding-right:22px}
.mycamp .tabs{border:0}
.mycamp .tabs a{padding-top:3px}
.sub{left:528px;top:4385px;height:921px;grid-template-rows:50px 200px 46px 6px 96px 100px 101px 100px 101px 62px 58px}
.sub .navi{border:0;padding:4px 28px 0 14px;font-size:13px;letter-spacing:.7px;color:#666}
.sub .cells{border-bottom:1px solid #eee}
.sub .tabs a,.mine .tabs a{padding-top:8px}
.cells .set{color:#0a6fdc}
.mine{left:1001px;top:4385px;height:921px;grid-template-rows:50px 200px 110px 6px 43px 39px 40px 6px 48px 39px 38px 39px 39px 40px 125px 58px}
.mine .entries{font-size:12px;padding:18px 27px 0}
.mine .entries i{margin-bottom:9px}
.link{display:flex;justify-content:space-between;align-items:center;padding:2px 9px 0 25px;border-bottom:1px solid #eee}
```
